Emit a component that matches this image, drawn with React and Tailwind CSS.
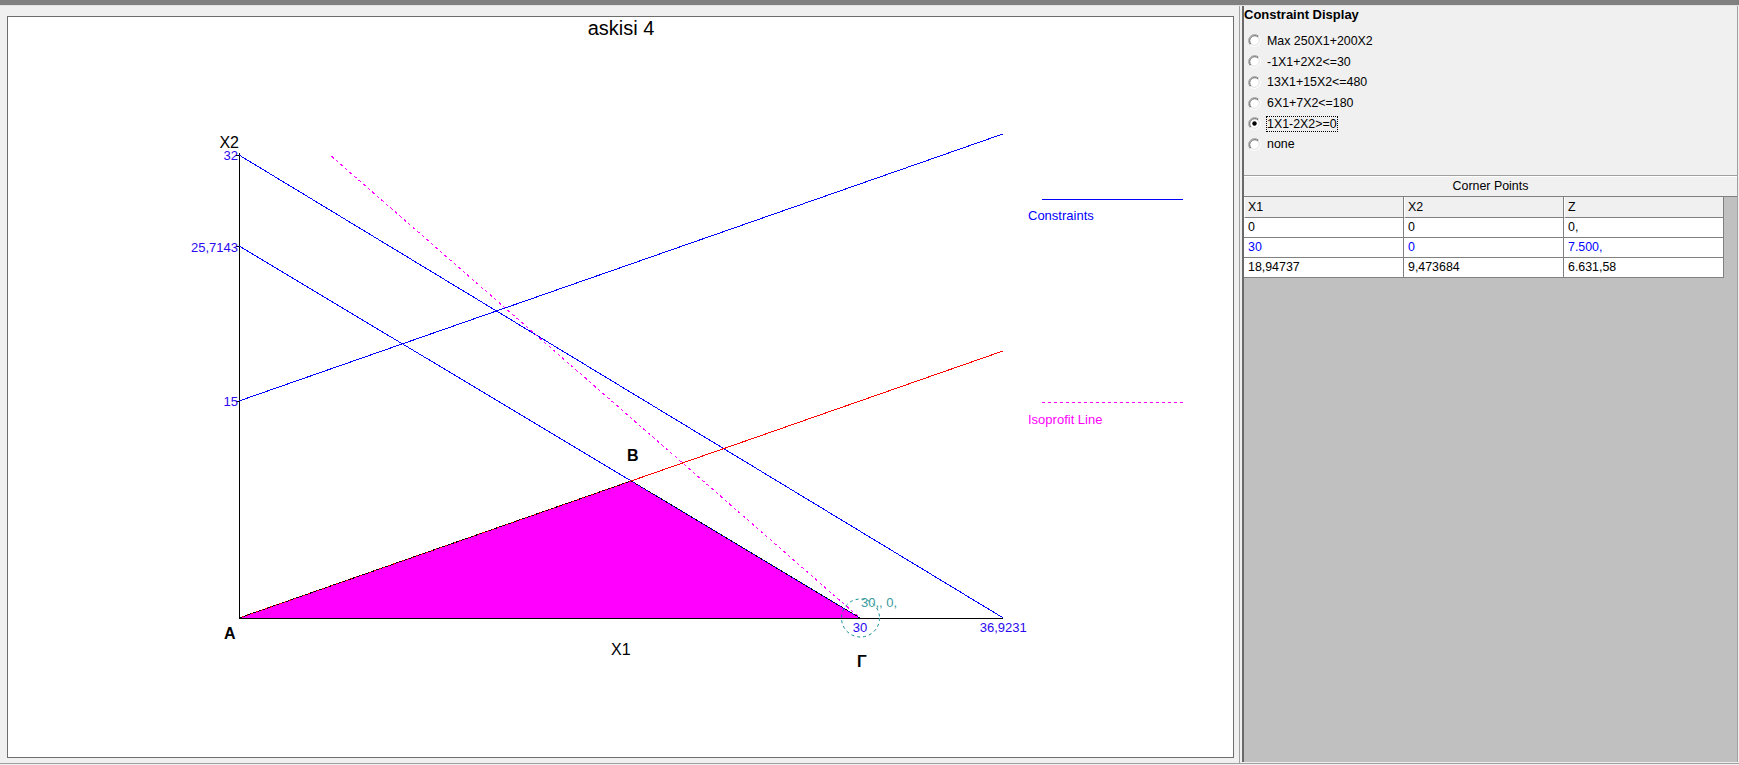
const OX = 239;
const OY = 618;
const SX = 621 / 30;
const SY = 463 / 32;
const px = (v) => OX + v * SX;
const py = (v) => OY - v * SY;

const options = [
  { label: "Max 250X1+200X2" },
  { label: "-1X1+2X2<=30" },
  { label: "13X1+15X2<=480" },
  { label: "6X1+7X2<=180" },
  { label: "1X1-2X2>=0", checked: true },
  { label: "none" },
];

const corners = [
  { x1: "0", x2: "0", z: "0,", blue: false },
  { x1: "30", x2: "0", z: "7.500,", blue: true },
  { x1: "18,94737", x2: "9,473684", z: "6.631,58", blue: false },
];

function Radio({ checked }) {
  return (
    <svg width="13" height="13" viewBox="0 0 13 13" className="shrink-0">
      <circle cx="6.5" cy="6.5" r="6" fill="#ffffff" />
      <path d="M2.26 10.74A6 6 0 0 1 10.74 2.26" fill="none" stroke="#9a9a9a" />
      <path d="M10.74 2.26A6 6 0 0 1 2.26 10.74" fill="none" stroke="#ffffff" />
      <path d="M2.97 10.03A5 5 0 0 1 10.03 2.97" fill="none" stroke="#5a5a5a" />
      <path d="M10.03 2.97A5 5 0 0 1 2.97 10.03" fill="none" stroke="#dcdcdc" />
      {checked && <circle cx="6.5" cy="6.5" r="2.2" fill="#000000" />}
    </svg>
  );
}

function Chart() {
  const B = [px(18.94737), py(9.473684)];
  const G = [px(30), OY];
  const xEnd = px(36.9231);
  const isoStart = 4.47;
  return (
    <svg
      className="absolute inset-0"
      width="1225"
      height="740"
      viewBox="8 17 1225 740"
      fontFamily="'Liberation Sans', Arial, sans-serif"
    >
      <text x="621" y="35" fontSize="20" textAnchor="middle" fill="#000">
        askisi 4
      </text>

      {/* feasible region */}
      <polygon points={`${OX},${OY} ${B[0]},${B[1]} ${G[0]},${G[1]}`} fill="#ff00ff" />

      {/* axes */}
      <g shapeRendering="crispEdges" stroke="#000">
        <line x1={OX + 0.5} y1="153" x2={OX + 0.5} y2={OY + 0.5} />
        <line x1={OX} y1={OY + 0.5} x2={xEnd} y2={OY + 0.5} />
        <line x1={OX - 3} y1="155.5" x2={OX} y2="155.5" />
        <line x1={OX - 3} y1="246.5" x2={OX} y2="246.5" />
        <line x1={OX - 3} y1="401.5" x2={OX} y2="401.5" />
      </g>

      {/* constraint lines */}
      <g shapeRendering="crispEdges" strokeWidth="1">
        <line x1={OX} y1={py(15)} x2={xEnd} y2={py(15 + 36.9231 / 2)} stroke="#0000ff" />
        <line x1={OX} y1={py(32)} x2={xEnd} y2={OY} stroke="#0000ff" />
        <line x1={OX} y1={py(25.7143)} x2={G[0]} y2={OY} stroke="#0000ff" />
        <line x1={OX} y1={OY} x2={xEnd} y2={py(36.9231 / 2)} stroke="#ff0000" />
        <line
          x1={px(isoStart)}
          y1={py(37.5 - 1.25 * isoStart)}
          x2={G[0]}
          y2={OY}
          stroke="#ff00ff"
          strokeDasharray="3 3"
        />
      </g>

      {/* region outline */}
      <polygon
        points={`${OX},${OY} ${B[0]},${B[1]} ${G[0]},${G[1]}`}
        fill="none"
        stroke="#000"
        strokeDasharray="3 2"
        shapeRendering="crispEdges"
      />

      {/* optimum marker */}
      <circle cx={G[0] + 0.5} cy={OY} r="19" fill="none" stroke="#108c8c" strokeDasharray="3 3" />
      <text x="861" y="607" fontSize="13" fill="#3a9a9e">
        30,, 0,
      </text>

      {/* axis values */}
      <g fontSize="13" fill="#2a08f0">
        <text x="238" y="160" textAnchor="end">32</text>
        <text x="238" y="251.5" textAnchor="end">25,7143</text>
        <text x="238" y="406" textAnchor="end">15</text>
        <text x={G[0]} y="632" textAnchor="middle">30</text>
        <text x={xEnd} y="632" textAnchor="middle">36,9231</text>
      </g>

      <text x="239" y="148" fontSize="16" textAnchor="end" fill="#000">X2</text>
      <text x="611" y="655" fontSize="16" fill="#000">X1</text>

      <g fontSize="16" fontWeight="bold" fill="#000">
        <text x="224" y="639">A</text>
        <text x="627" y="461">B</text>
        <text x="857" y="667">Γ</text>
      </g>

      {/* legend */}
      <line x1="1042" y1="199.5" x2="1183" y2="199.5" stroke="#0000ff" shapeRendering="crispEdges" />
      <text x="1028" y="220" fontSize="13" fill="#0000ff">Constraints</text>
      <line
        x1="1042"
        y1="402.5"
        x2="1183"
        y2="402.5"
        stroke="#ff00ff"
        strokeDasharray="3 3"
        shapeRendering="crispEdges"
      />
      <text x="1028" y="424" fontSize="13" fill="#ff00ff">Isoprofit Line</text>
    </svg>
  );
}

export default function App() {
  return (
    <div className="w-[1739px] h-[765px] bg-[#f0f0f0] flex flex-col overflow-hidden font-['Liberation_Sans',Arial,sans-serif] text-black">
      <div className="h-[5px] shrink-0 bg-[#808080]" />
      <div className="h-px shrink-0 bg-[#e3e3e3]" />

      <div className="flex h-[757px] shrink-0">
        {/* graph pane */}
        <div className="w-[1239px] shrink-0 flex pl-[7px] pr-[5px] pt-[10px] pb-[5px]">
          <div className="relative flex-1 bg-white border border-[#6d6d6d]">
            <Chart />
          </div>
        </div>

        {/* right panel */}
        <div className="w-[500px] shrink-0 flex border-l border-[#a0a0a0] pl-[2px] pr-px pb-px">
          <div className="flex-1 flex flex-col border-l-2 border-r border-l-[#696969] border-r-[#a0a0a0]">
            <div className="h-[170px] shrink-0 border-b border-[#a0a0a0] pt-px">
              <div className="h-[16px] leading-[16px] text-[13px] font-bold">Constraint Display</div>
              <div className="mt-[7.6px] flex flex-col">
                {options.map((o) => (
                  <div key={o.label} className="h-[20.7px] flex items-center pl-[4px] gap-[5px]">
                    <Radio checked={o.checked} />
                    <span
                      className={
                        o.checked
                          ? "text-[12.4px] leading-[14px] border border-dotted border-black"
                          : "text-[12.4px] leading-[14px] border border-transparent"
                      }
                    >
                      {o.label}
                    </span>
                  </div>
                ))}
              </div>
            </div>

            <div className="h-[21px] shrink-0 flex items-center justify-center text-[12.4px] bg-[#f0f0f0] border-t border-white border-b border-b-[#808080]">
              Corner Points
            </div>

            <div className="flex-1 bg-[#c0c0c0] flex flex-col">
              <div className="flex h-[21px] w-[480px]">
                {["X1", "X2", "Z"].map((h) => (
                  <div
                    key={h}
                    className="w-[160px] bg-[#f0f0f0] border-l border-white border-r border-b border-r-[#808080] border-b-[#808080] pl-[3px] text-[12.4px] flex items-center"
                  >
                    {h}
                  </div>
                ))}
              </div>
              {corners.map((r) => (
                <div
                  key={r.x1}
                  className={r.blue ? "flex h-[20px] w-[480px] text-[#0000ff]" : "flex h-[20px] w-[480px] text-black"}
                >
                  {[r.x1, r.x2, r.z].map((v, i) => (
                    <div
                      key={i}
                      className="w-[160px] bg-white border-r border-b border-[#808080] pl-[4px] text-[12.4px] flex items-center"
                    >
                      {v}
                    </div>
                  ))}
                </div>
              ))}
            </div>
          </div>
        </div>
      </div>

      <div className="h-px shrink-0 bg-[#a0a0a0]" />
      <div className="h-px shrink-0 bg-[#f0f0f0]" />
    </div>
  );
}
